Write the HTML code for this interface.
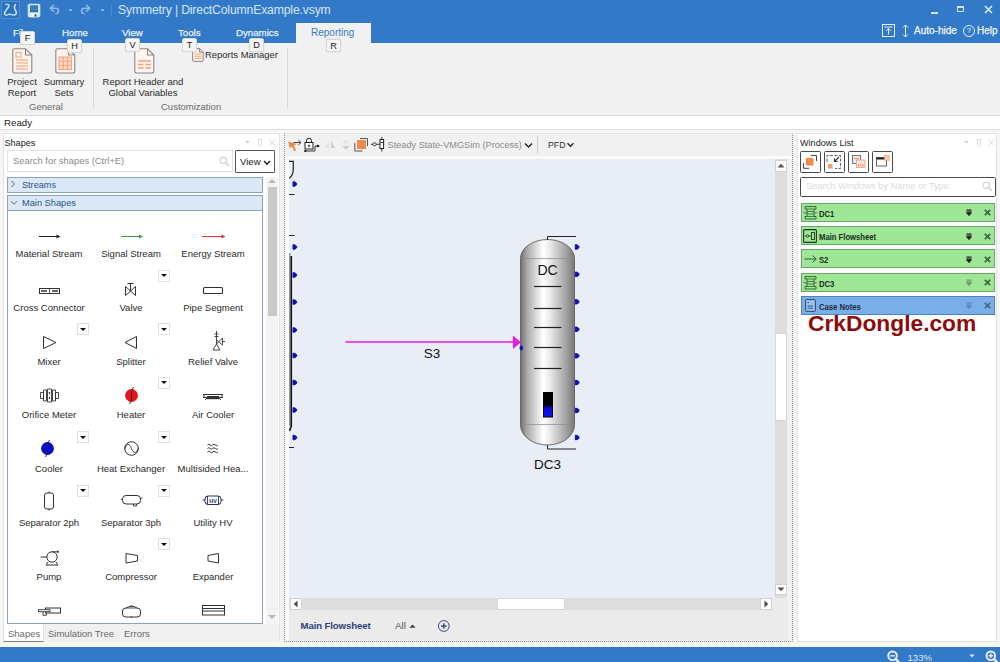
<!DOCTYPE html>
<html>
<head>
<meta charset="utf-8">
<style>
*{box-sizing:border-box;margin:0;padding:0}
html,body{width:1000px;height:662px;overflow:hidden;background:#f6f6f6;font-family:"Liberation Sans",sans-serif;font-size:10px;color:#222}
.abs{position:absolute}
#titlebar{left:0;top:0;width:1000px;height:43px;background:#327ac7}
#ribbon{left:0;top:43px;width:1000px;height:72px;background:#f1f1f1}
#ready{left:0;top:115px;width:1000px;height:15px;background:#fff;border-top:1px solid #dcdcdc;border-bottom:1px solid #dcdcdc}
#statusbar{left:0;top:646.5px;width:1000px;height:15.5px;overflow:hidden;background:#327ac7}
.t{position:absolute;white-space:nowrap;line-height:1}
.tab{color:#e4effa;font-size:9.7px;-webkit-text-stroke:0.25px #e4effa}
.kt{position:absolute;background:#f4f4f4;border:1px solid #d8d8d8;border-radius:2px;color:#222;font-size:9.2px;text-align:center;line-height:13px;width:15px;height:14px;box-shadow:0 0 1px rgba(0,0,0,.25)}
.panel{position:absolute;background:#fff;border:1px solid #e3e3e3}
.lbl{position:absolute;text-align:center;font-size:9.5px;color:#2a2a2a;white-space:nowrap;line-height:11px;transform:translateX(-50%)}
.dd{position:absolute;width:12px;height:12px;background:#fdfdfd;border:1px solid #e0e0e0}
.dd:after{content:"";position:absolute;left:2px;top:3.5px;border-left:3px solid transparent;border-right:3px solid transparent;border-top:3.5px solid #111}
</style>
</head>
<body>
<!-- TITLE BAR -->
<div id="titlebar" class="abs">
 <!-- app icon -->
 <div class="abs" style="left:1px;top:1px;width:19px;height:18px;border:1px solid #4f8fd2;background:#2b72bd"></div>
 <svg class="abs" style="left:2px;top:2px" width="17" height="16" viewBox="0 0 17 16"><path d="M4 2.5 C7 2 7.5 3 6.5 5 C5 7.5 2.5 9 2.5 11.5 C2.5 13.5 5 13.5 6.5 12.5 C8.5 11.5 10 13.5 12.5 13 C15 12.5 14.5 10 13.5 8.5 C12.5 7 12 4.5 13.5 2.5" fill="none" stroke="#cfe2f6" stroke-width="1.5" stroke-linecap="round"/></svg>
 <!-- save -->
 <svg class="abs" style="left:27px;top:3px" width="14" height="15" viewBox="0 0 14 15"><rect x="0.7" y="0.7" width="12.6" height="13.6" rx="1.5" fill="#cfe2f6"/><rect x="3" y="2.3" width="8" height="4.6" fill="#327ac7"/><rect x="3" y="7" width="8" height="2.2" fill="#2f7f80"/><rect x="3.5" y="10.5" width="7" height="3.8" fill="#f3f8fd"/><rect x="7.5" y="11.3" width="2" height="2.4" fill="#2f5d8a"/></svg>
 <!-- undo -->
 <svg class="abs" style="left:49px;top:4px" width="11" height="11" viewBox="0 0 11 11"><path d="M5 0.8 L1.2 4.2 L5 7.6 M1.5 4.2 H6.5 C10.5 4.2 10.5 9.5 6.5 9.8" fill="none" stroke="#8fb9e6" stroke-width="1.5"/></svg>
 <div class="abs" style="left:69px;top:9px;width:3px;height:2px;background:#7fb0e3"></div>
 <!-- redo -->
 <svg class="abs" style="left:80px;top:4px" width="11" height="11" viewBox="0 0 11 11"><path d="M6 0.8 L9.8 4.2 L6 7.6 M9.5 4.2 H4.5 C0.5 4.2 0.5 9.5 4.5 9.8" fill="none" stroke="#8fb9e6" stroke-width="1.5"/></svg>
 <div class="abs" style="left:101px;top:9px;width:3px;height:2px;background:#7fb0e3"></div>
 <div class="abs" style="left:111px;top:4px;width:1px;height:13px;background:#4b8bd0"></div>
 <div class="t" style="left:118px;top:4px;font-size:12.2px;color:#d4e5f7;letter-spacing:-0.15px">Symmetry | DirectColumnExample.vsym</div>
 <!-- tabs -->
 <div class="t tab" style="left:13px;top:28px">File</div>
 <div class="t tab" style="left:62px;top:28px">Home</div>
 <div class="t tab" style="left:122px;top:28px">View</div>
 <div class="t tab" style="left:178px;top:28px">Tools</div>
 <div class="t tab" style="left:236px;top:28px">Dynamics</div>
 <div class="abs" style="left:296px;top:23px;width:75px;height:20px;background:#f1f1f1"></div>
 <div class="t" style="left:311px;top:28px;font-size:10px;color:#3a7cc4">Reporting</div>
 <!-- window controls -->
 <div class="abs" style="left:931px;top:11.5px;width:7px;height:2px;background:#cfe2f6"></div>
 <div class="abs" style="left:957px;top:6px;width:7px;height:6px;border:1px solid #cfe2f6;border-top-width:2px"></div>
 <svg class="abs" style="left:984px;top:5px" width="9" height="9" viewBox="0 0 9 9"><path d="M1 1 L8 8 M8 1 L1 8" stroke="#dbe9f8" stroke-width="1.6"/></svg>
 <!-- right controls -->
 <svg class="abs" style="left:882px;top:24px" width="13" height="13" viewBox="0 0 13 13"><rect x="0.5" y="0.5" width="12" height="12" fill="none" stroke="#e6f0fb" stroke-width="1"/><path d="M2.5 3 H10.5 M6.5 10.5 V4.5 M4 7 L6.5 4.5 L9 7" fill="none" stroke="#e6f0fb" stroke-width="1"/></svg>
 <svg class="abs" style="left:902px;top:24px" width="7" height="14" viewBox="0 0 7 14"><path d="M3.5 1 V13 M1 3.5 L3.5 1 L6 3.5 M1 10.5 L3.5 13 L6 10.5" fill="none" stroke="#e6f0fb" stroke-width="1"/></svg>
 <div class="t" style="left:914px;top:26px;font-size:10px;color:#eef5fc;-webkit-text-stroke:0.25px #eef5fc">Auto-hide</div>
 <div class="abs" style="left:963px;top:25px;width:12px;height:12px;border:1px solid #e6f0fb;border-radius:6px;color:#e6f0fb;font-size:8px;line-height:10px;text-align:center">?</div>
 <div class="t" style="left:977px;top:26px;font-size:10px;color:#eef5fc;-webkit-text-stroke:0.25px #eef5fc">Help</div>
</div>
<div id="ribbon" class="abs">
 <!-- Project Report icon -->
 <svg class="abs" style="left:12px;top:5px" width="21" height="26" viewBox="0 0 21 26"><path d="M2.5 0.8 H13.5 L19.8 7 V23 Q19.8 25 17.8 25 H2.5 Q0.8 25 0.8 23 V2.5 Q0.8 0.8 2.5 0.8 Z" fill="#fdf3ee" stroke="#8c8682" stroke-width="1.1"/><path d="M13.5 0.8 V7 H19.8" fill="none" stroke="#8c8682" stroke-width="1.1"/><rect x="4" y="4.5" width="5" height="4.5" fill="none" stroke="#f4a582" stroke-width="1"/><path d="M4 12 H16 M4 15 H16 M4 18 H16 M4 21 H16" stroke="#f7b89c" stroke-width="1.4"/></svg>
 <div class="lbl" style="left:22px;top:33px">Project<br>Report</div>
 <!-- Summary Sets icon -->
 <svg class="abs" style="left:55px;top:5px" width="21" height="26" viewBox="0 0 21 26"><path d="M2.5 0.8 H13.5 L19.8 7 V23 Q19.8 25 17.8 25 H2.5 Q0.8 25 0.8 23 V2.5 Q0.8 0.8 2.5 0.8 Z" fill="#fdf3ee" stroke="#8c8682" stroke-width="1.1"/><path d="M13.5 0.8 V7 H19.8" fill="none" stroke="#8c8682" stroke-width="1.1"/><rect x="4" y="9" width="12.5" height="12.5" fill="#fbd9c8" stroke="#f3a17c" stroke-width="1"/><path d="M8.2 9 V21.5 M12.4 9 V21.5 M4 13.2 H16.5 M4 17.4 H16.5" stroke="#f3a17c" stroke-width="1"/></svg>
 <div class="lbl" style="left:64px;top:33px">Summary<br>Sets</div>
 <div class="t" style="left:29px;top:59px;font-size:9.5px;color:#6a6a6a">General</div>
 <div class="abs" style="left:93px;top:5px;width:1px;height:60px;background:#d8d8d8"></div>
 <!-- Report header icon -->
 <svg class="abs" style="left:134px;top:5px" width="21" height="26" viewBox="0 0 21 26"><path d="M2.5 0.8 H13.5 L19.8 7 V23 Q19.8 25 17.8 25 H2.5 Q0.8 25 0.8 23 V2.5 Q0.8 0.8 2.5 0.8 Z" fill="#fdf6f2" stroke="#8c8682" stroke-width="1.1"/><path d="M13.5 0.8 V7 H19.8" fill="none" stroke="#8c8682" stroke-width="1.1"/><path d="M4 13 H17 M4 16.5 H9.5 M11.5 16.5 H17 M4 20 H9.5 M11.5 20 H17" stroke="#f4a07a" stroke-width="1.6"/></svg>
 <div class="lbl" style="left:143px;top:33px">Report Header and<br>Global Variables</div>
 <!-- Reports manager -->
 <svg class="abs" style="left:192px;top:5px" width="12" height="14" viewBox="0 0 12 14"><path d="M1.5 0.6 H7.5 L11.2 4 V12.4 Q11.2 13.4 10 13.4 H1.8 Q0.7 13.4 0.7 12.4 V1.5 Q0.7 0.6 1.5 0.6 Z" fill="#fdf3ee" stroke="#8c8682" stroke-width="1"/><path d="M7.5 0.6 V4 H11.2" fill="none" stroke="#8c8682" stroke-width="1"/><path d="M2.5 6 H9.5 M2.5 8.2 H9.5 M2.5 10.4 H9.5" stroke="#f4a582" stroke-width="1"/></svg>
 <div class="t" style="left:205px;top:7px;font-size:9.45px;color:#2a2a2a">Reports Manager</div>
 <div class="t" style="left:161px;top:59px;font-size:9.5px;color:#6a6a6a">Customization</div>
 <div class="abs" style="left:287px;top:5px;width:1px;height:60px;background:#d8d8d8"></div>
</div>
<!-- key tips -->
<div class="kt" style="left:20px;top:31px">F</div>
<div class="kt" style="left:67px;top:39px">H</div>
<div class="kt" style="left:125px;top:38px">V</div>
<div class="kt" style="left:182px;top:38px">T</div>
<div class="kt" style="left:249px;top:38px">D</div>
<div class="kt" style="left:326px;top:39px;height:13px">R</div>

<div id="ready" class="abs"><div class="t" style="left:4px;top:2px;font-size:9.7px;color:#222">Ready</div></div>
<div id="statusbar" class="abs">
 <svg class="abs" style="left:885px;top:2px" width="17" height="14" viewBox="0 0 17 14"><circle cx="7.5" cy="6.8" r="4.3" fill="none" stroke="#e8f1fb" stroke-width="1.9"/><path d="M5.3 6.8 H9.7" stroke="#e8f1fb" stroke-width="1.5"/><path d="M10.8 10.2 L15 14.5" stroke="#e8f1fb" stroke-width="2.4"/></svg>
 <div class="t" style="left:907.5px;top:6px;font-size:9.6px;color:#dbe9f8">133%</div>
 <svg class="abs" style="left:969px;top:7px" width="6" height="4" viewBox="0 0 6 4"><path d="M0.5 0.5 H5.5 L3 3.5 Z" fill="#dbe9f8"/></svg>
 <svg class="abs" style="left:983px;top:2px" width="17" height="14" viewBox="0 0 17 14"><circle cx="7.8" cy="6.8" r="4.3" fill="none" stroke="#e8f1fb" stroke-width="1.9"/><path d="M5.6 6.8 H10 M7.8 4.6 V9" stroke="#e8f1fb" stroke-width="1.4"/><path d="M11.1 10.2 L15.3 14.5" stroke="#e8f1fb" stroke-width="2.4"/></svg>
</div>

<!-- LEFT PANEL -->
<div id="left" class="panel" style="left:3px;top:133px;width:277px;height:509px"></div>
<!--LEFTSTART--><!-- LEFT CONTENT -->
<div class="t" style="left:4.5px;top:139px;font-size:9.1px;color:#222">Shapes</div>
<svg class="abs" style="left:243px;top:137px" width="34" height="11" viewBox="0 0 34 11"><path d="M2 4 H7 L4.5 6.5 Z" fill="#cfcfcf"/><path d="M15.5 2.5 V8.5 M18.5 2.5 V8.5 M14.5 2.5 H19.5 M17 8.5 V10" stroke="#d6d6d6" stroke-width="0.9" fill="none"/><path d="M26.5 2.5 L32 8.5 M32 2.5 L26.5 8.5" stroke="#d6d6d6" stroke-width="1"/></svg>
<div class="abs" style="left:7px;top:150px;width:226px;height:22px;border:1px solid #e2e2e2;background:#fff"></div>
<div class="t" style="left:13px;top:156px;font-size:9.4px;color:#8a8a8a">Search for shapes (Ctrl+E)</div>
<svg class="abs" style="left:219px;top:156px" width="11" height="11" viewBox="0 0 11 11"><circle cx="4.3" cy="4.3" r="3.2" fill="none" stroke="#d0d0d0" stroke-width="1.2"/><path d="M6.8 6.8 L10 10" stroke="#d0d0d0" stroke-width="1.5"/></svg>
<div class="abs" style="left:235px;top:150px;width:39.5px;height:22.5px;border:1px solid #555;background:#fff;border-radius:1px"></div>
<div class="t" style="left:240px;top:157.3px;font-size:9.6px;color:#222">View</div>
<svg class="abs" style="left:262.5px;top:159.5px" width="8" height="6" viewBox="0 0 8 6"><path d="M1 1 L4 4.2 L7 1" fill="none" stroke="#222" stroke-width="1.4"/></svg>
<div class="abs" style="left:7px;top:177px;width:256px;height:16px;border:1px solid #8aa4bf;background:#dce8f5"></div>
<svg class="abs" style="left:10px;top:180px" width="6" height="8" viewBox="0 0 6 8"><path d="M1.5 1 L4.5 4 L1.5 7" fill="none" stroke="#4a6b8c" stroke-width="1"/></svg>
<div class="t" style="left:22px;top:180.5px;font-size:9.15px;color:#27568a">Streams</div>
<div class="abs" style="left:7px;top:195px;width:256px;height:429px;border:1px solid #8aa4bf;background:#fff"></div>
<div class="abs" style="left:7px;top:195px;width:256px;height:16px;border:1px solid #8aa4bf;background:#dce8f5"></div>
<svg class="abs" style="left:10px;top:200px" width="8" height="6" viewBox="0 0 8 6"><path d="M1 1.2 L4 4.2 L7 1.2" fill="none" stroke="#4a6b8c" stroke-width="1"/></svg>
<div class="t" style="left:22px;top:198.5px;font-size:9.25px;color:#27568a">Main Shapes</div>
<div class="abs" style="left:266px;top:177px;width:12px;height:447px;background:#f3f3f3"></div>
<div class="abs" style="left:268px;top:187px;width:9px;height:129px;background:#c9c9c9"></div>
<svg class="abs" style="left:267px;top:178px" width="10" height="6" viewBox="0 0 10 6"><path d="M1 5 L5 1 L9 5 Z" fill="#b8b8b8"/></svg>
<svg class="abs" style="left:267px;top:614px" width="10" height="6" viewBox="0 0 10 6"><path d="M1 1 L5 5 L9 1 Z" fill="#b8b8b8"/></svg>
<svg class="abs" style="left:0;top:0" width="290" height="662" viewBox="0 0 290 662"><path d="M39 236.5 H57.5" stroke="#222" stroke-width="1" fill="none"/><path d="M56.5 234.5 L60.5 236.5 L56.5 238.5 Z" fill="#222"/><path d="M121 236.5 H140" stroke="#3a9a4a" stroke-width="1" fill="none"/><path d="M139 234.5 L143 236.5 L139 238.5 Z" fill="#3a9a4a"/><path d="M202 236.5 H222.5" stroke="#e0303a" stroke-width="1" fill="none"/><path d="M221.5 234.5 L225.5 236.5 L221.5 238.5 Z" fill="#e0303a"/><rect x="39.5" y="288.5" width="20" height="5" fill="#fff" stroke="#333" stroke-width="1"/><path d="M41 291 H47 M52 291 H58" stroke="#333" stroke-width="1.6"/><path d="M49.5 288.5 V293.5" stroke="#333" stroke-width="0.8"/><path d="M125.5 286.5 V295.5 L135.5 286.5 V295.5 Z" fill="none" stroke="#333" stroke-width="1"/><path d="M130.5 291 V283.5 M127.5 283.5 H133.5" stroke="#333" stroke-width="1" fill="none"/><rect x="203.5" y="287.5" width="19" height="6" rx="1" fill="#fff" stroke="#333" stroke-width="1.1"/><path d="M43.5 336.5 V348.5 L56 342.5 Z" fill="none" stroke="#333" stroke-width="1"/><path d="M136.5 336.5 V348.5 L125 342.5 Z" fill="none" stroke="#333" stroke-width="1"/><path d="M216.5 331 V344 M214.5 334 H218.5 M214.5 336.5 H218.5 M213 350 H220 L216.5 344 Z M216.5 344 L222.5 338 V345 L216.5 340" fill="none" stroke="#333" stroke-width="0.9"/><path d="M222.5 341.5 H225" stroke="#333" stroke-width="0.9"/><path d="M40.5 392.5 H43.5 V398.5 H40.5 Z M55.5 392.5 H58.5 V398.5 H55.5 Z M43.5 390 H46.5 V401 H43.5 Z M52.5 390 H55.5 V401 H52.5 Z M47.5 389 H51.5 V402 H47.5 Z" fill="#fff" stroke="#333" stroke-width="0.9"/><path d="M49.5 392 V394 M49.5 397 V399" stroke="#333" stroke-width="1.2"/><circle cx="131.5" cy="395.5" r="6.4" fill="#e8141c"/><path d="M133.5 387 C130 392 133 399 129.5 404" stroke="#222" stroke-width="0.9" fill="none"/><path d="M203 394.5 H223 M204 394.5 V397.5 M222 394.5 V397.5 M203 397.5 H207 M219 397.5 H223" stroke="#333" stroke-width="1" fill="none"/><rect x="207" y="396" width="12" height="3.2" fill="#333"/><path d="M205 400 L207 398 M221 400 L219 398" stroke="#333" stroke-width="0.9"/><circle cx="47.5" cy="448.5" r="6.4" fill="#0a0ad0"/><path d="M49.5 440 C46 445 49 452 45.5 457" stroke="#222" stroke-width="0.9" fill="none"/><circle cx="131.5" cy="448.5" r="6.8" fill="#fff" stroke="#333" stroke-width="1"/><path d="M124.8 449 C126.5 443 129.5 443 131.5 448.5 C133.5 454 136.5 454 138.2 448" stroke="#333" stroke-width="0.9" fill="none"/><path d="M207.5 445 q1.3 -1.6 2.6 0 t2.6 0 t2.6 0 t2.6 0 M207.5 448.5 q1.3 -1.6 2.6 0 t2.6 0 t2.6 0 t2.6 0 M207.5 452 q1.3 -1.6 2.6 0 t2.6 0 t2.6 0 t2.6 0" stroke="#333" stroke-width="1" fill="none"/><path d="M44.5 495 Q44.5 493 47 493 H51 Q53.5 493 53.5 495 V507 Q53.5 509 51 509 H47 Q44.5 509 44.5 507 Z" fill="#fff" stroke="#333" stroke-width="1"/><path d="M49 493 V491.5 M49 509 V510.5" stroke="#333" stroke-width="1"/><rect x="122.5" y="495.5" width="18" height="8.5" rx="3.5" fill="#fff" stroke="#333" stroke-width="1"/><path d="M120.8 499.5 H122.5 M140.5 498 H142.3 M133.5 504 V506 H136.5 V504" stroke="#333" stroke-width="0.9" fill="none"/><rect x="205" y="496" width="16" height="8.5" rx="3" fill="#fff" stroke="#2a2a6a" stroke-width="1"/><path d="M202.5 500 H205 M221 500 H223.5 M207.5 496 V504.5 M218.5 496 V504.5" stroke="#2a2a6a" stroke-width="0.9"/><text x="213" y="502.6" font-size="5.5" font-weight="bold" text-anchor="middle" fill="#2a2a6a" font-family="Liberation Sans">HV</text><circle cx="52" cy="557" r="5.2" fill="#fff" stroke="#333" stroke-width="1"/><path d="M40.5 557 H47 M52 551.8 H58.5 M48 562 L46 565 H58 L56 562" stroke="#333" stroke-width="1" fill="none"/><path d="M57 550.5 L59 551.8 L57 553" stroke="#333" stroke-width="0.8" fill="none"/><path d="M126 553.5 L137.5 555.5 V561 L126 563 Z" fill="#fff" stroke="#333" stroke-width="1" stroke-linejoin="round"/><path d="M218.5 553.5 L208 555.5 V561 L218.5 563 Z" fill="#fff" stroke="#333" stroke-width="1" stroke-linejoin="round"/><rect x="45.5" y="608" width="15" height="5" fill="#fff" stroke="#333" stroke-width="1"/><rect x="38.5" y="609.7" width="11.5" height="2" fill="#fff" stroke="#333" stroke-width="0.9"/><path d="M43 612 V615.3 H46.5 V613" stroke="#333" stroke-width="0.9" fill="none"/><path d="M122.5 611 Q122.5 608 126 608 Q131.5 604.5 137 608 Q140.5 608 140.5 611 V614 Q140.5 617 137 617 H126 Q122.5 617 122.5 614 Z" fill="#fff" stroke="#333" stroke-width="1"/><path d="M126 608 H137" stroke="#333" stroke-width="0.9"/><circle cx="131.5" cy="606" r="0.8" fill="#333"/><circle cx="131.5" cy="617.3" r="0.8" fill="#333"/><rect x="202.5" y="605.5" width="22" height="9.5" fill="#fff" stroke="#333" stroke-width="1"/><path d="M202.5 608.5 H224.5 M202.5 611 H224.5" stroke="#333" stroke-width="1"/></svg>
<div class="lbl" style="left:49px;top:248.3px">Material Stream</div>
<div class="lbl" style="left:131px;top:248.3px">Signal Stream</div>
<div class="lbl" style="left:213px;top:248.3px">Energy Stream</div>
<div class="lbl" style="left:49px;top:301.8px">Cross Connector</div>
<div class="lbl" style="left:131px;top:301.8px">Valve</div>
<div class="lbl" style="left:213px;top:301.8px">Pipe Segment</div>
<div class="lbl" style="left:49px;top:355.8px">Mixer</div>
<div class="lbl" style="left:131px;top:355.8px">Splitter</div>
<div class="lbl" style="left:213px;top:355.8px">Relief Valve</div>
<div class="lbl" style="left:49px;top:409.3px">Orifice Meter</div>
<div class="lbl" style="left:131px;top:409.3px">Heater</div>
<div class="lbl" style="left:213px;top:409.3px">Air Cooler</div>
<div class="lbl" style="left:49px;top:463.1px">Cooler</div>
<div class="lbl" style="left:131px;top:463.1px">Heat Exchanger</div>
<div class="lbl" style="left:213px;top:463.1px">Multisided Hea...</div>
<div class="lbl" style="left:49px;top:516.8px">Separator 2ph</div>
<div class="lbl" style="left:131px;top:516.8px">Separator 3ph</div>
<div class="lbl" style="left:213px;top:516.8px">Utility HV</div>
<div class="lbl" style="left:49px;top:570.5999999999999px">Pump</div>
<div class="lbl" style="left:131px;top:570.5999999999999px">Compressor</div>
<div class="lbl" style="left:213px;top:570.5999999999999px">Expander</div>
<div class="dd" style="left:158px;top:269.5px"></div>
<div class="dd" style="left:76.5px;top:323px"></div>
<div class="dd" style="left:158px;top:323px"></div>
<div class="dd" style="left:158px;top:376.5px"></div>
<div class="dd" style="left:76.5px;top:431px"></div>
<div class="dd" style="left:158px;top:431px"></div>
<div class="dd" style="left:76.5px;top:484.5px"></div>
<div class="dd" style="left:158px;top:484.5px"></div>
<div class="dd" style="left:158px;top:538px"></div>
<div class="abs" style="left:4px;top:624px;width:275px;height:18px;background:#f0f0f0"></div>
<div class="abs" style="left:3px;top:624px;width:40.5px;height:17.5px;background:#fff;border:1px solid #e0e0e0;border-top:none;border-bottom:1.5px solid #7a7a7a"></div>
<div class="t" style="left:8px;top:629px;font-size:9.5px;color:#6a6a6a">Shapes</div>
<div class="t" style="left:48px;top:629px;font-size:9.5px;color:#6a6a6a">Simulation Tree</div>
<div class="t" style="left:124px;top:629px;font-size:9.5px;color:#6a6a6a">Errors</div><!--LEFTEND-->
<!-- CENTER PANEL -->

<!--CSTART--><div class="abs" style="left:284px;top:133px;width:509px;height:509px;background:#f1f1f1;border:1px dotted #8a8a8a;border-top:1px solid #e4e4e4"></div>
<div class="abs" style="left:285px;top:156px;width:4px;height:485px;background:#fbfbfb"></div>
<div class="abs" style="left:285px;top:156px;width:507px;height:3px;background:#fbfbfb"></div>
<svg class="abs" style="left:286px;top:135px" width="300" height="20" viewBox="286 135 300 20">
<path d="M288.3 141.5 L297 144 L294 145.5 L296 150.3 L293.8 151 L292 146.3 L289.8 148.5 Z" fill="#f08a4b"/><path d="M293.5 142.5 H301 M298.3 140 L301 142.5 L298.3 145" stroke="#333" stroke-width="0.9" fill="none"/>
<rect x="305" y="142.5" width="8" height="6.5" fill="#fff" stroke="#222" stroke-width="1"/><path d="M306.5 142.5 V140.5 Q306.5 138.3 309 138.3 Q311.5 138.3 311.5 140.5 V142.5" stroke="#222" stroke-width="1" fill="none"/><rect x="308.2" y="144.8" width="1.6" height="2" fill="#222"/><path d="M305.5 151 H315 V146 H317" stroke="#222" stroke-width="0.9" fill="none"/><circle cx="318" cy="146" r="1.3" fill="#222"/><rect x="304.3" y="150" width="2" height="2" fill="#222"/>
<path d="M329 140 V148 H325 Z" fill="#e2e2e2"/><path d="M331 140 V148 H335 Z" fill="#cfcfcf"/>
<path d="M342 143.5 H350 L346 140 Z" fill="#e2e2e2"/><path d="M342 146 H350 L346 150 Z" fill="#cfcfcf"/>
<rect x="357" y="140" width="9" height="9" fill="#f08a4b"/><path d="M360 138.5 H367.5 V146 M354.8 143 V151 H362.5" stroke="#444" stroke-width="0.9" fill="none"/>
<circle cx="374.5" cy="144.3" r="1.6" fill="#fff" stroke="#222" stroke-width="0.9"/><path d="M371 144.3 H373 M376 144.3 H380" stroke="#222" stroke-width="0.9"/><rect x="380" y="139.5" width="3.6" height="9" fill="#fff" stroke="#222" stroke-width="1"/><path d="M381.8 137 V139.5 M381.8 148.5 V151.5 M380.5 142.5 H383.5" stroke="#222" stroke-width="0.9"/>
<path d="M525 143.5 L528.5 147 L532 143.5" stroke="#222" stroke-width="1.5" fill="none"/>
<path d="M567.5 143.3 L570.5 146.3 L573.5 143.3" stroke="#222" stroke-width="1.3" fill="none"/>
</svg>
<div class="t" style="left:387.5px;top:140.5px;font-size:9.2px;color:#8a8a8a">Steady State-VMGSim (Process)</div>
<div class="abs" style="left:537px;top:136px;width:1px;height:18px;background:#d0d0d0"></div>
<div class="t" style="left:548px;top:140.5px;font-size:8.8px;color:#333">PFD</div>
<div class="abs" style="left:289px;top:159px;width:486px;height:439px;background:#e9edf6;overflow:hidden"></div>
<div class="abs" style="left:775px;top:159px;width:12px;height:439px;background:#dedede"></div>
<div class="abs" style="left:775px;top:160px;width:12px;height:12px;background:#fcfcfc;border:1px solid #d2d2d2"></div>
<svg class="abs" style="left:777px;top:163px" width="8" height="5" viewBox="0 0 8 5"><path d="M0.5 4.5 L4 0.8 L7.5 4.5 Z" fill="#555"/></svg>
<div class="abs" style="left:775px;top:333px;width:12px;height:88px;background:#fff;border:1px solid #d6d6d6"></div>
<div class="abs" style="left:775px;top:584px;width:12px;height:11px;background:#fcfcfc;border:1px solid #d2d2d2"></div>
<svg class="abs" style="left:777px;top:587px" width="8" height="5" viewBox="0 0 8 5"><path d="M0.5 0.5 L4 4.2 L7.5 0.5 Z" fill="#555"/></svg>
<div class="abs" style="left:289px;top:598px;width:486px;height:12px;background:#dedede"></div>
<div class="abs" style="left:290px;top:598px;width:12px;height:12px;background:#fcfcfc;border:1px solid #d2d2d2"></div>
<svg class="abs" style="left:293px;top:600px" width="5" height="8" viewBox="0 0 5 8"><path d="M4.5 0.5 L0.8 4 L4.5 7.5 Z" fill="#444"/></svg>
<div class="abs" style="left:760px;top:598px;width:12px;height:12px;background:#fcfcfc;border:1px solid #d2d2d2"></div>
<svg class="abs" style="left:764px;top:600px" width="5" height="8" viewBox="0 0 5 8"><path d="M0.5 0.5 L4.2 4 L0.5 7.5 Z" fill="#444"/></svg>
<div class="abs" style="left:497px;top:598px;width:68px;height:12px;background:#fff;border:1px solid #d6d6d6"></div>
<div class="abs" style="left:289px;top:610px;width:499px;height:31px;background:#ebebeb"></div>
<div class="abs" style="left:772px;top:598px;width:16px;height:12px;background:#ebebeb"></div>
<div class="t" style="left:300.5px;top:621px;font-size:9.6px;font-weight:bold;color:#2d3f7c;letter-spacing:-0.1px">Main Flowsheet</div>
<div class="t" style="left:395px;top:621px;font-size:9.8px;color:#555">All</div>
<svg class="abs" style="left:409px;top:624px" width="7" height="4" viewBox="0 0 7 4"><path d="M0.3 3.8 L3.5 0.5 L6.7 3.8 Z" fill="#444"/></svg>
<svg class="abs" style="left:437px;top:619px" width="14" height="14" viewBox="0 0 14 14"><circle cx="6.8" cy="7" r="5.4" fill="none" stroke="#3a4a7a" stroke-width="1"/><path d="M4 7 H9.6 M6.8 4.2 V9.8" stroke="#3a4a7a" stroke-width="1.4"/></svg>
<svg class="abs" style="left:289px;top:159px" width="486" height="439" viewBox="289 159 486 439">
<defs><linearGradient id="met" x1="0" x2="1" y1="0" y2="0"><stop offset="0" stop-color="#6e6e6e"/><stop offset="0.12" stop-color="#a9a9a9"/><stop offset="0.42" stop-color="#ffffff"/><stop offset="0.55" stop-color="#e9e9e9"/><stop offset="0.85" stop-color="#a0a0a0"/><stop offset="1" stop-color="#787878"/></linearGradient>
<linearGradient id="lvl" x1="0" x2="0" y1="0" y2="1"><stop offset="0" stop-color="#000"/><stop offset="0.3" stop-color="#000"/><stop offset="0.5" stop-color="#0b0bd8"/><stop offset="1" stop-color="#1212f0"/></linearGradient></defs>
<path d="M520.5 258.5 A27 19 0 0 1 574.5 258.5 V425 A27 20 0 0 1 520.5 425 Z" fill="url(#met)" stroke="#555" stroke-width="0.8"/>
<path d="M520.5 258.5 H574.5" stroke="#8a8a8a" stroke-width="0.7"/><path d="M520.5 424.5 H574.5" stroke="#8a8a8a" stroke-width="0.7"/>
<path d="M547.5 240 V236.5 H576" stroke="#222" stroke-width="1" fill="none"/><path d="M547.5 445 V449 H576" stroke="#222" stroke-width="1" fill="none"/>
<path d="M534 286.5 H561.5" stroke="#222" stroke-width="1.2"/>
<path d="M534 308.5 H561.5" stroke="#222" stroke-width="1.2"/>
<path d="M534 327.5 H561.5" stroke="#222" stroke-width="1.2"/>
<path d="M534 347.5 H561.5" stroke="#222" stroke-width="1.2"/>
<path d="M534 368.5 H561.5" stroke="#222" stroke-width="1.2"/>
<rect x="543" y="392" width="10" height="25.5" fill="#000"/><rect x="544" y="400" width="8" height="16.5" fill="url(#lvl)"/>
<path d="M575.3 244.7 C580.3 244.7 580.3 249.3 575.3 249.3 Z" fill="#1010b0" stroke="#1010b0" stroke-width="1" stroke-linejoin="round"/>
<path d="M575.3 272.0 C580.3 272.0 580.3 276.6 575.3 276.6 Z" fill="#1010b0" stroke="#1010b0" stroke-width="1" stroke-linejoin="round"/>
<path d="M575.3 299.5 C580.3 299.5 580.3 304.1 575.3 304.1 Z" fill="#1010b0" stroke="#1010b0" stroke-width="1" stroke-linejoin="round"/>
<path d="M575.3 327.0 C580.3 327.0 580.3 331.6 575.3 331.6 Z" fill="#1010b0" stroke="#1010b0" stroke-width="1" stroke-linejoin="round"/>
<path d="M575.3 353.5 C580.3 353.5 580.3 358.1 575.3 358.1 Z" fill="#1010b0" stroke="#1010b0" stroke-width="1" stroke-linejoin="round"/>
<path d="M575.3 380.2 C580.3 380.2 580.3 384.8 575.3 384.8 Z" fill="#1010b0" stroke="#1010b0" stroke-width="1" stroke-linejoin="round"/>
<path d="M575.3 408.2 C580.3 408.2 580.3 412.8 575.3 412.8 Z" fill="#1010b0" stroke="#1010b0" stroke-width="1" stroke-linejoin="round"/>
<path d="M575.3 435.2 C580.3 435.2 580.3 439.8 575.3 439.8 Z" fill="#1010b0" stroke="#1010b0" stroke-width="1" stroke-linejoin="round"/>
<path d="M345.5 342 H514" stroke="#f018e0" stroke-width="1.4"/><path d="M513 335.5 L521 342.3 L513 349 Z" fill="#f018e0"/>
<ellipse cx="521.3" cy="348" rx="1.8" ry="2.6" fill="#1515c0"/>
<path d="M289 161.3 H293.3 V169 Q293.3 175 289.3 178.3" stroke="#222" stroke-width="1.2" fill="none"/>
<path d="M289 194.5 H294.5 M289 235.5 H294.5 M289 447.5 H294" stroke="#222" stroke-width="1.1"/>
<path d="M289.8 253 V426" stroke="#8a8a8a" stroke-width="1.4"/><path d="M291.3 256 V426 L289.5 431" stroke="#111" stroke-width="1.6" fill="none"/>
<path d="M293 181.7 C298 181.7 298 186.3 293 186.3 Z" fill="#1010b0" stroke="#1010b0" stroke-width="1" stroke-linejoin="round"/>
<path d="M293 244.7 C298 244.7 298 249.3 293 249.3 Z" fill="#1010b0" stroke="#1010b0" stroke-width="1" stroke-linejoin="round"/>
<path d="M293 272.7 C298 272.7 298 277.3 293 277.3 Z" fill="#1010b0" stroke="#1010b0" stroke-width="1" stroke-linejoin="round"/>
<path d="M293 299.7 C298 299.7 298 304.3 293 304.3 Z" fill="#1010b0" stroke="#1010b0" stroke-width="1" stroke-linejoin="round"/>
<path d="M293 327.7 C298 327.7 298 332.3 293 332.3 Z" fill="#1010b0" stroke="#1010b0" stroke-width="1" stroke-linejoin="round"/>
<path d="M293 353.2 C298 353.2 298 357.8 293 357.8 Z" fill="#1010b0" stroke="#1010b0" stroke-width="1" stroke-linejoin="round"/>
<path d="M293 380.2 C298 380.2 298 384.8 293 384.8 Z" fill="#1010b0" stroke="#1010b0" stroke-width="1" stroke-linejoin="round"/>
<path d="M293 407.7 C298 407.7 298 412.3 293 412.3 Z" fill="#1010b0" stroke="#1010b0" stroke-width="1" stroke-linejoin="round"/>
<path d="M293 435.2 C298 435.2 298 439.8 293 439.8 Z" fill="#1010b0" stroke="#1010b0" stroke-width="1" stroke-linejoin="round"/>
<text x="547.5" y="275" font-size="14" text-anchor="middle" fill="#111" font-family="Liberation Sans">DC</text>
<text x="432" y="358" font-size="13.5" text-anchor="middle" fill="#111" font-family="Liberation Sans">S3</text>
<text x="547.5" y="469" font-size="13.5" text-anchor="middle" fill="#111" font-family="Liberation Sans">DC3</text>
</svg><!--CEND-->
<!-- RIGHT PANEL -->
<div id="right" class="panel" style="left:797px;top:133px;width:200px;height:509px"></div>
<!--RSTART--><div class="t" style="left:800px;top:139px;font-size:9.1px;color:#222">Windows List</div>
<svg class="abs" style="left:962px;top:137px" width="34" height="11" viewBox="0 0 34 11"><path d="M2 4 H7 L4.5 6.5 Z" fill="#cfcfcf"/><path d="M15.5 2.5 V8.5 M18.5 2.5 V8.5 M14.5 2.5 H19.5 M17 8.5 V10" stroke="#d6d6d6" stroke-width="0.9" fill="none"/><path d="M26.5 2.5 L32 8.5 M32 2.5 L26.5 8.5" stroke="#d6d6d6" stroke-width="1"/></svg>
<div class="abs" style="left:799.5px;top:150.5px;width:21.5px;height:22px;border:1px solid #4a4a4a;border-radius:1.5px;background:#fdfdfd"></div>
<div class="abs" style="left:823.5px;top:150.5px;width:21.5px;height:22px;border:1px solid #4a4a4a;border-radius:1.5px;background:#fdfdfd"></div>
<div class="abs" style="left:847.7px;top:150.5px;width:21.5px;height:22px;border:1px solid #4a4a4a;border-radius:1.5px;background:#fdfdfd"></div>
<div class="abs" style="left:871.8px;top:150.5px;width:21.5px;height:22px;border:1px solid #4a4a4a;border-radius:1.5px;background:#fdfdfd"></div>
<svg class="abs" style="left:797px;top:148px" width="100" height="28" viewBox="797 148 100 28">
<rect x="806" y="158" width="7.5" height="7.5" fill="#f08a4b"/><path d="M811 155.5 H816.5 V161 M803.5 163 V168.3 H809" stroke="#444" stroke-width="1" fill="none"/>
<rect x="828" y="164" width="4.5" height="4.5" fill="#f4a06e"/><path d="M827 157 V155.5 H840.5 V168.5 H835" stroke="#555" stroke-width="0.9" fill="none" stroke-dasharray="3 1.5"/><path d="M827 158.5 V162" stroke="#555" stroke-width="0.9"/><path d="M839 157 L834.5 161.5 M834.5 158.5 V161.5 H837.5" stroke="#333" stroke-width="1.1" fill="none"/>
<rect x="852.5" y="155.5" width="8" height="8" fill="#e9e9e9" stroke="#6a6a6a" stroke-width="0.9"/><rect x="856.5" y="160" width="8.5" height="7.5" fill="#fbe3d6" stroke="#e9a98a" stroke-width="0.9"/><path d="M854 158.5 H859 M858.5 164 V166.5 M860.8 164 V166.5 M863 164 V166.5" stroke="#e08a60" stroke-width="0.9"/>
<rect x="876.5" y="157.5" width="10" height="8.5" fill="#fff" stroke="#555" stroke-width="0.9"/><rect x="876.5" y="157.5" width="10" height="2" fill="#222"/><rect x="884.5" y="155.3" width="5" height="5" fill="#f9c9ad" stroke="#f0a078" stroke-width="0.6"/>
</svg>
<div class="abs" style="left:799.5px;top:176.5px;width:196px;height:20px;border:1px solid #4a4a4a;border-radius:1.5px;background:#fff"></div>
<div class="t" style="left:806px;top:182px;font-size:9.3px;color:#dcdcdc">Search Windows by Name or Type:</div>
<svg class="abs" style="left:982px;top:181px" width="11" height="11" viewBox="0 0 11 11"><circle cx="4.3" cy="4.3" r="3.2" fill="none" stroke="#d4d4d4" stroke-width="1.3"/><path d="M6.8 6.8 L10 10" stroke="#d4d4d4" stroke-width="1.6"/></svg>
<div class="abs" style="left:800.5px;top:202.7px;width:194.5px;height:19.2px;background:#a0e697;border:1px solid #68a864"></div>
<div class="t" style="left:819px;top:209.7px;font-size:8.3px;font-weight:bold;color:#16301a;transform-origin:0 50%;transform:scaleX(0.925)">DC1</div>
<svg class="abs" style="left:803px;top:205.7px" width="14" height="14" viewBox="0 0 14 14"><path d="M2 0.6 H13 V3 H11 V10.5 H13 V13 H2 V10.5 H4 V3 H2 Z" fill="none" stroke="#2e6a34" stroke-width="1"/><path d="M4 3 H11 M4 5.5 H11 M4 8 H11 M4 10.5 H11" stroke="#2e6a34" stroke-width="0.8"/><path d="M0.5 6.8 H4 M11 6.8 H13.8" stroke="#2e6a34" stroke-width="0.9"/></svg>
<svg class="abs" style="left:966px;top:209.2px" width="6" height="8" viewBox="0 0 6 8"><path d="M0.5 0.5 H5.5 V4.2 L3 7.2 L0.5 4.2 Z" fill="#1d2d1d"/><path d="M0.5 2.2 H5.5" stroke="#a0e697" stroke-width="0.7"/></svg>
<svg class="abs" style="left:984px;top:209.2px" width="7" height="7" viewBox="0 0 7 7"><path d="M0.8 0.8 L6.2 6.2 M6.2 0.8 L0.8 6.2" stroke="#3f6a44" stroke-width="1.8"/></svg>
<div class="abs" style="left:800.5px;top:226px;width:194.5px;height:19.2px;background:#a0e697;border:1px solid #68a864"></div>
<div class="t" style="left:819px;top:233px;font-size:8.3px;font-weight:bold;color:#16301a;transform-origin:0 50%;transform:scaleX(0.925)">Main Flowsheet</div>
<svg class="abs" style="left:803px;top:228.5px" width="14" height="14" viewBox="0 0 14 14"><rect x="0.6" y="0.6" width="12.8" height="12.8" rx="1" fill="none" stroke="#1e3a20" stroke-width="1.1"/><circle cx="4.5" cy="7" r="1.3" fill="none" stroke="#1e3a20" stroke-width="0.8"/><path d="M1.5 7 H3.2 M5.8 7 H8.5" stroke="#1e3a20" stroke-width="0.8"/><rect x="8.5" y="3.5" width="3" height="7" fill="none" stroke="#1e3a20" stroke-width="0.9"/></svg>
<svg class="abs" style="left:966px;top:232.5px" width="6" height="8" viewBox="0 0 6 8"><path d="M0.5 0.5 H5.5 V4.2 L3 7.2 L0.5 4.2 Z" fill="#1d2d1d"/><path d="M0.5 2.2 H5.5" stroke="#a0e697" stroke-width="0.7"/></svg>
<svg class="abs" style="left:984px;top:232.5px" width="7" height="7" viewBox="0 0 7 7"><path d="M0.8 0.8 L6.2 6.2 M6.2 0.8 L0.8 6.2" stroke="#3f6a44" stroke-width="1.8"/></svg>
<div class="abs" style="left:800.5px;top:249.2px;width:194.5px;height:19.2px;background:#a0e697;border:1px solid #68a864"></div>
<div class="t" style="left:819px;top:256.2px;font-size:8.3px;font-weight:bold;color:#16301a;transform-origin:0 50%;transform:scaleX(0.925)">S2</div>
<svg class="abs" style="left:804px;top:254.2px" width="14" height="10" viewBox="0 0 14 10"><path d="M0.5 5 H12 M8.5 1.5 L12.3 5 L8.5 8.5" fill="none" stroke="#2e5a30" stroke-width="1"/></svg>
<svg class="abs" style="left:966px;top:255.7px" width="6" height="8" viewBox="0 0 6 8"><path d="M0.5 0.5 H5.5 V4.2 L3 7.2 L0.5 4.2 Z" fill="#1d2d1d"/><path d="M0.5 2.2 H5.5" stroke="#a0e697" stroke-width="0.7"/></svg>
<svg class="abs" style="left:984px;top:255.7px" width="7" height="7" viewBox="0 0 7 7"><path d="M0.8 0.8 L6.2 6.2 M6.2 0.8 L0.8 6.2" stroke="#3f6a44" stroke-width="1.8"/></svg>
<div class="abs" style="left:800.5px;top:272.5px;width:194.5px;height:19.2px;background:#a0e697;border:1px solid #68a864"></div>
<div class="t" style="left:819px;top:279.5px;font-size:8.3px;font-weight:bold;color:#16301a;transform-origin:0 50%;transform:scaleX(0.925)">DC3</div>
<svg class="abs" style="left:803px;top:275.5px" width="14" height="14" viewBox="0 0 14 14"><path d="M2 0.6 H13 V3 H11 V10.5 H13 V13 H2 V10.5 H4 V3 H2 Z" fill="none" stroke="#2e6a34" stroke-width="1"/><path d="M4 3 H11 M4 5.5 H11 M4 8 H11 M4 10.5 H11" stroke="#2e6a34" stroke-width="0.8"/><path d="M0.5 6.8 H4 M11 6.8 H13.8" stroke="#2e6a34" stroke-width="0.9"/></svg>
<svg class="abs" style="left:966px;top:279.0px" width="6" height="8" viewBox="0 0 6 8"><path d="M0.5 0.5 H5.5 V4.2 L3 7.2 L0.5 4.2 Z" fill="#6f9a70"/><path d="M0.5 2.2 H5.5" stroke="#a0e697" stroke-width="0.7"/></svg>
<svg class="abs" style="left:984px;top:279.0px" width="7" height="7" viewBox="0 0 7 7"><path d="M0.8 0.8 L6.2 6.2 M6.2 0.8 L0.8 6.2" stroke="#3f6a44" stroke-width="1.8"/></svg>
<div class="abs" style="left:800.5px;top:295.7px;width:194.5px;height:19.2px;background:#7aaee8;border:1px solid #4c82c2"></div>
<div class="t" style="left:819px;top:302.7px;font-size:8.3px;font-weight:bold;color:#1c2c44;transform-origin:0 50%;transform:scaleX(0.925)">Case Notes</div>
<svg class="abs" style="left:805px;top:299.2px" width="11" height="13" viewBox="0 0 11 13"><rect x="0.6" y="0.6" width="9.8" height="11.8" rx="0.8" fill="#9cc2ee" stroke="#2a4870" stroke-width="1"/><path d="M2.5 3.5 H4 M2.5 7 H8 M2.5 9.2 H8" stroke="#2a4870" stroke-width="0.9"/></svg>
<svg class="abs" style="left:966px;top:302.2px" width="6" height="8" viewBox="0 0 6 8"><path d="M0.5 0.5 H5.5 V4.2 L3 7.2 L0.5 4.2 Z" fill="#5f86b8"/><path d="M0.5 2.2 H5.5" stroke="#7aaee8" stroke-width="0.7"/></svg>
<svg class="abs" style="left:984px;top:302.2px" width="7" height="7" viewBox="0 0 7 7"><path d="M0.8 0.8 L6.2 6.2 M6.2 0.8 L0.8 6.2" stroke="#48678f" stroke-width="1.8"/></svg>
<div class="t" id="wm" style="left:807.5px;top:313px;font-size:22px;font-weight:bold;color:#8c0b0b;transform-origin:0 0;transform:scaleX(1.035)">CrkDongle.com</div><!--REND-->
</body>
</html>
